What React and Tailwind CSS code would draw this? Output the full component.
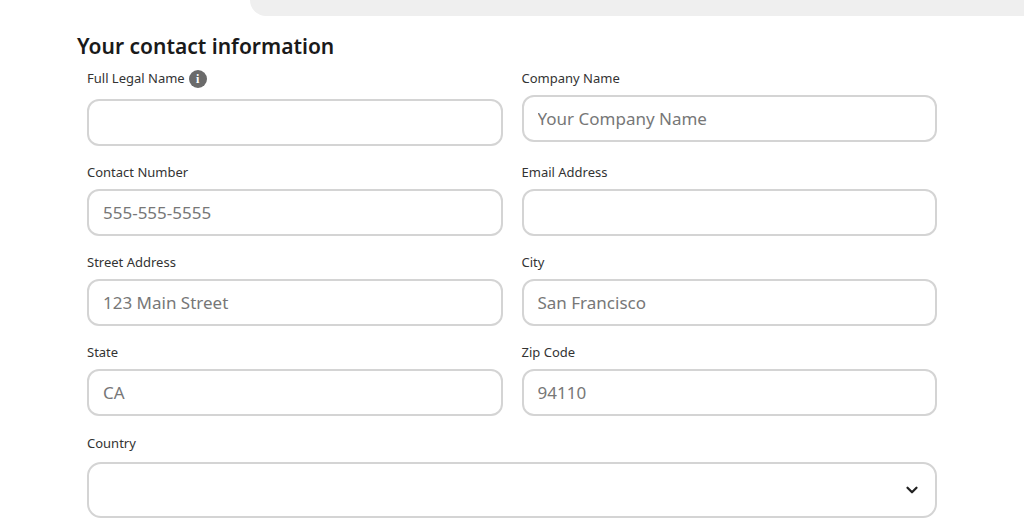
import { ChevronDown } from "lucide-react";

const font = { fontFamily: '"Noto Sans", "Open Sans", sans-serif' };

function Field({ label, placeholder, info }) {
  return (
    <div className="flex flex-col">
      <div className="flex items-center gap-1 h-[18px] text-[13px] text-[#333]">
        {label}
        {info && (
          <span className="w-[18px] h-[18px] rounded-full bg-[#6b6b6b] text-white text-[12px] font-bold flex items-center justify-center leading-none" style={{ fontFamily: "serif" }}>
            i
          </span>
        )}
      </div>
      <input
        placeholder={placeholder}
        className={`${info ? "mt-[11px]" : "mt-[7px]"} h-[47px] w-full rounded-[12px] border-2 border-[#d4d4d4] px-[14px] text-[17px] text-[#333] placeholder:text-[#777] outline-none`}
      />
    </div>
  );
}

export default function App() {
  return (
    <div className="w-[1024px] h-[532px] bg-white overflow-hidden" style={font}>
      <div className="flex h-[16px]">
        <div className="w-[250px]" />
        <div className="flex-1 bg-[#efefef] rounded-bl-[18px]" />
      </div>
      <div className="pl-[77px] pt-[16px]">
        <h1 className="text-[21px] font-semibold text-[#1a1a1a] leading-[28px]">Your contact information</h1>
        <div className="ml-[10px] mt-[10px] w-[850px] grid grid-cols-2 gap-x-[19px] gap-y-[18px]">
          <Field label="Full Legal Name" info />
          <Field label="Company Name" placeholder="Your Company Name" />
          <Field label="Contact Number" placeholder="555-555-5555" />
          <Field label="Email Address" />
          <Field label="Street Address" placeholder="123 Main Street" />
          <Field label="City" placeholder="San Francisco" />
          <Field label="State" placeholder="CA" />
          <Field label="Zip Code" placeholder="94110" />
          <div className="col-span-2 flex flex-col">
            <div className="h-[18px] text-[13px] text-[#333]">Country</div>
            <div className="mt-[10px] h-[56px] rounded-[14px] border-2 border-[#d4d4d4] flex items-center justify-end pr-[14px]">
              <ChevronDown size={18} strokeWidth={3} className="text-[#222]" />
            </div>
          </div>
        </div>
      </div>
    </div>
  );
}
